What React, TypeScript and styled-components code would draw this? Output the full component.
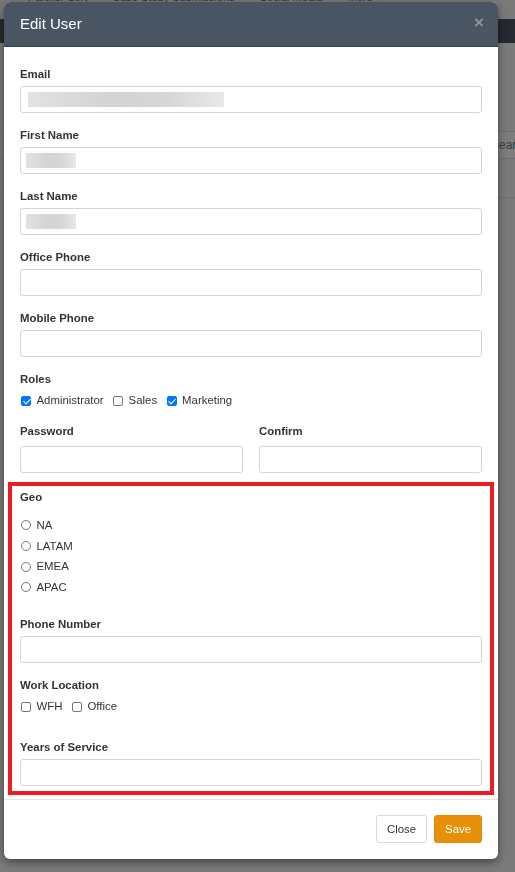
import React from "react";
import styled, { createGlobalStyle } from "styled-components";

const GlobalStyle = createGlobalStyle`
  html, body {
    margin: 0;
    padding: 0;
  }
  body {
    width: 515px;
    height: 872px;
    overflow: hidden;
    background: #7a7a7a;
    font-family: "Liberation Sans", Arial, sans-serif;
  }
  * { box-sizing: border-box; }
`;

/* ---------- dimmed page behind the modal ---------- */
const Page = styled.div`
  width: 515px;
  height: 872px;
  overflow: hidden;
  background: #7a7a7a;
`;

const TopMenu = styled.nav`
  display: flex;
  gap: 25px;
  height: 28px;
  margin-top: -9px;
  padding-left: 28px;
  align-items: flex-start;
  color: #333;
  font-size: 11px;
  line-height: 12px;
`;

const NavBar = styled.div`
  height: 24px;
  background: #262a30;
`;

const Toolbar = styled.div`
  display: grid;
  grid-template-columns: 484px 120px;
  margin-top: 88px;
  border-top: 1px solid #6f6f6f;
  border-bottom: 1px solid #6f6f6f;
  height: 28px;
`;

const SearchBox = styled.div`
  border-left: 1px solid #6f6f6f;
  background: #7d7d7d;
  color: #3a3a3a;
  font-size: 12px;
  line-height: 26px;
  padding-left: 6px;
`;

const TableLine = styled.div`
  margin-top: 38px;
  border-top: 1px solid #6f6f6f;
`;

/* ---------- modal ---------- */
const Overlay = styled.div`
  position: fixed;
  inset: 0;
  padding: 2px 0 0 4px;
`;

const Modal = styled.div`
  width: 494px;
  background: #fff;
  border-radius: 6px;
  box-shadow: 0 3px 8px rgba(0, 0, 0, 0.45);
  overflow: hidden;
`;

const Header = styled.div`
  height: 45px;
  display: flex;
  align-items: center;
  justify-content: space-between;
  padding: 0 14px 0 16px;
  background: #4a5563;
  border-bottom: 1px solid #3b4450;
`;

const Title = styled.h4`
  margin: 0;
  font-size: 15px;
  font-weight: normal;
  color: #fff;
  line-height: 20px;
`;

const CloseX = styled.span`
  font-size: 17px;
  font-weight: bold;
  color: #8c96a1;
  line-height: 1;
  margin-top: -4px;
`;

const Body = styled.div`
  padding: 18px 16px 4px;
`;

const Group = styled.div<{ $mb?: number }>`
  margin-bottom: ${(p) => (p.$mb ?? 13)}px;
`;

const Label = styled.label<{ $mb?: number }>`
  display: block;
  padding-top: 1px;
  font-size: 11.4px;
  font-weight: bold;
  line-height: 16px;
  color: #333;
  margin-bottom: ${(p) => (p.$mb ?? 4)}px;
`;

const TextInput = styled.input<{ $redact?: number; $rx?: number }>`
  display: block;
  width: 100%;
  height: 27px;
  border: 1px solid #d4d4d4;
  border-radius: 3px;
  background-color: #fff;
  background-image: ${(p) =>
    p.$redact
      ? "linear-gradient(90deg, #e2e2e2 0%, #d4d4d4 40%, #d6d6d6 70%, #e8e8e8 100%)"
      : "none"};
  background-repeat: no-repeat;
  background-position: ${(p) => (p.$rx ?? 7)}px 5px;
  background-size: ${(p) => p.$redact ?? 0}px 15px;
  font: inherit;
  outline: none;
`;

const Row = styled.div`
  display: flex;
  align-items: center;
  height: 17px;
`;

const Option = styled.label`
  display: inline-flex;
  align-items: center;
  gap: 5.5px;
  margin-right: 8.5px;
  font-size: 11.4px;
  color: #333;
  line-height: 17px;
`;

const Check = styled.input.attrs({ type: "checkbox" })`
  appearance: none;
  width: 10px;
  height: 10px;
  margin: 0 0 0 1px;
  border: 1px solid #767676;
  border-radius: 2px;
  background: #fff;
  position: relative;
  &:checked {
    background: #0075ff;
    border-color: #0075ff;
  }
  &:checked::after {
    content: "";
    position: absolute;
    left: 2.5px;
    top: 0px;
    width: 3px;
    height: 6px;
    border: solid #fff;
    border-width: 0 1.6px 1.6px 0;
    transform: rotate(45deg);
  }
`;

const Radio = styled.input.attrs({ type: "radio" })`
  appearance: none;
  width: 10px;
  height: 10px;
  margin: 0 0 0 1px;
  border: 1px solid #767676;
  border-radius: 50%;
  background: #fff;
`;

const RadioList = styled.div`
  display: flex;
  flex-direction: column;
`;

const RadioRow = styled.div`
  display: flex;
  align-items: center;
  height: 20.7px;
`;

const TwoCol = styled.div`
  display: grid;
  grid-template-columns: 1fr 1fr;
  column-gap: 16px;
  margin-bottom: 9px;
`;

const Highlight = styled.section`
  margin: 0 -12px;
  border: 4px solid #ed1c24;
  padding: 2px 8px 5px;
`;

const Footer = styled.div`
  display: flex;
  justify-content: flex-end;
  gap: 7px;
  padding: 15px 16px 16px;
  border-top: 1px solid #e5e5e5;
`;

const Button = styled.button<{ $primary?: boolean }>`
  height: 28px;
  padding: 0 10px;
  border-radius: 3px;
  font-family: inherit;
  font-size: 11.4px;
  border: 1px solid ${(p) => (p.$primary ? "#e08a07" : "#d9d9d9")};
  background: ${(p) => (p.$primary ? "#e8900a" : "#fff")};
  color: ${(p) => (p.$primary ? "#fff" : "#333")};
`;

export default function App() {
  return (
    <>
      <GlobalStyle />
      <Page>
        <TopMenu>
          <span>Partner Sort</span>
          <span>Case Study Submissions</span>
          <span>Social Media</span>
          <span>More ▾</span>
        </TopMenu>
        <NavBar />
        <Toolbar>
          <span />
          <SearchBox>Search...</SearchBox>
        </Toolbar>
        <TableLine />
      </Page>
      <Overlay>
        <Modal>
          <Header>
            <Title>Edit User</Title>
            <CloseX>×</CloseX>
          </Header>
          <Body>
            <Group>
              <Label>Email</Label>
              <TextInput $redact={196} $rx={7} readOnly />
            </Group>
            <Group>
              <Label>First Name</Label>
              <TextInput $redact={50} $rx={5} readOnly />
            </Group>
            <Group>
              <Label>Last Name</Label>
              <TextInput $redact={50} $rx={5} readOnly />
            </Group>
            <Group>
              <Label>Office Phone</Label>
              <TextInput />
            </Group>
            <Group>
              <Label>Mobile Phone</Label>
              <TextInput />
            </Group>
            <Group $mb={13}>
              <Label $mb={5}>Roles</Label>
              <Row>
                <Option>
                  <Check defaultChecked />
                  Administrator
                </Option>
                <Option>
                  <Check />
                  Sales
                </Option>
                <Option>
                  <Check defaultChecked />
                  Marketing
                </Option>
              </Row>
            </Group>
            <TwoCol>
              <div>
                <Label $mb={7}>Password</Label>
                <TextInput type="password" />
              </div>
              <div>
                <Label $mb={7}>Confirm</Label>
                <TextInput type="password" />
              </div>
            </TwoCol>
            <Highlight>
              <Group $mb={17.5}>
                <Label $mb={10}>Geo</Label>
                <RadioList>
                  {["NA", "LATAM", "EMEA", "APAC"].map((g) => (
                    <RadioRow key={g}>
                      <Option>
                        <Radio name="geo" />
                        {g}
                      </Option>
                    </RadioRow>
                  ))}
                </RadioList>
              </Group>
              <Group>
                <Label>Phone Number</Label>
                <TextInput />
              </Group>
              <Group $mb={22.5}>
                <Label $mb={5}>Work Location</Label>
                <Row>
                  <Option>
                    <Check />
                    WFH
                  </Option>
                  <Option>
                    <Check />
                    Office
                  </Option>
                </Row>
              </Group>
              <Group $mb={0}>
                <Label>Years of Service</Label>
                <TextInput />
              </Group>
            </Highlight>
          </Body>
          <Footer>
            <Button>Close</Button>
            <Button $primary>Save</Button>
          </Footer>
        </Modal>
      </Overlay>
    </>
  );
}
